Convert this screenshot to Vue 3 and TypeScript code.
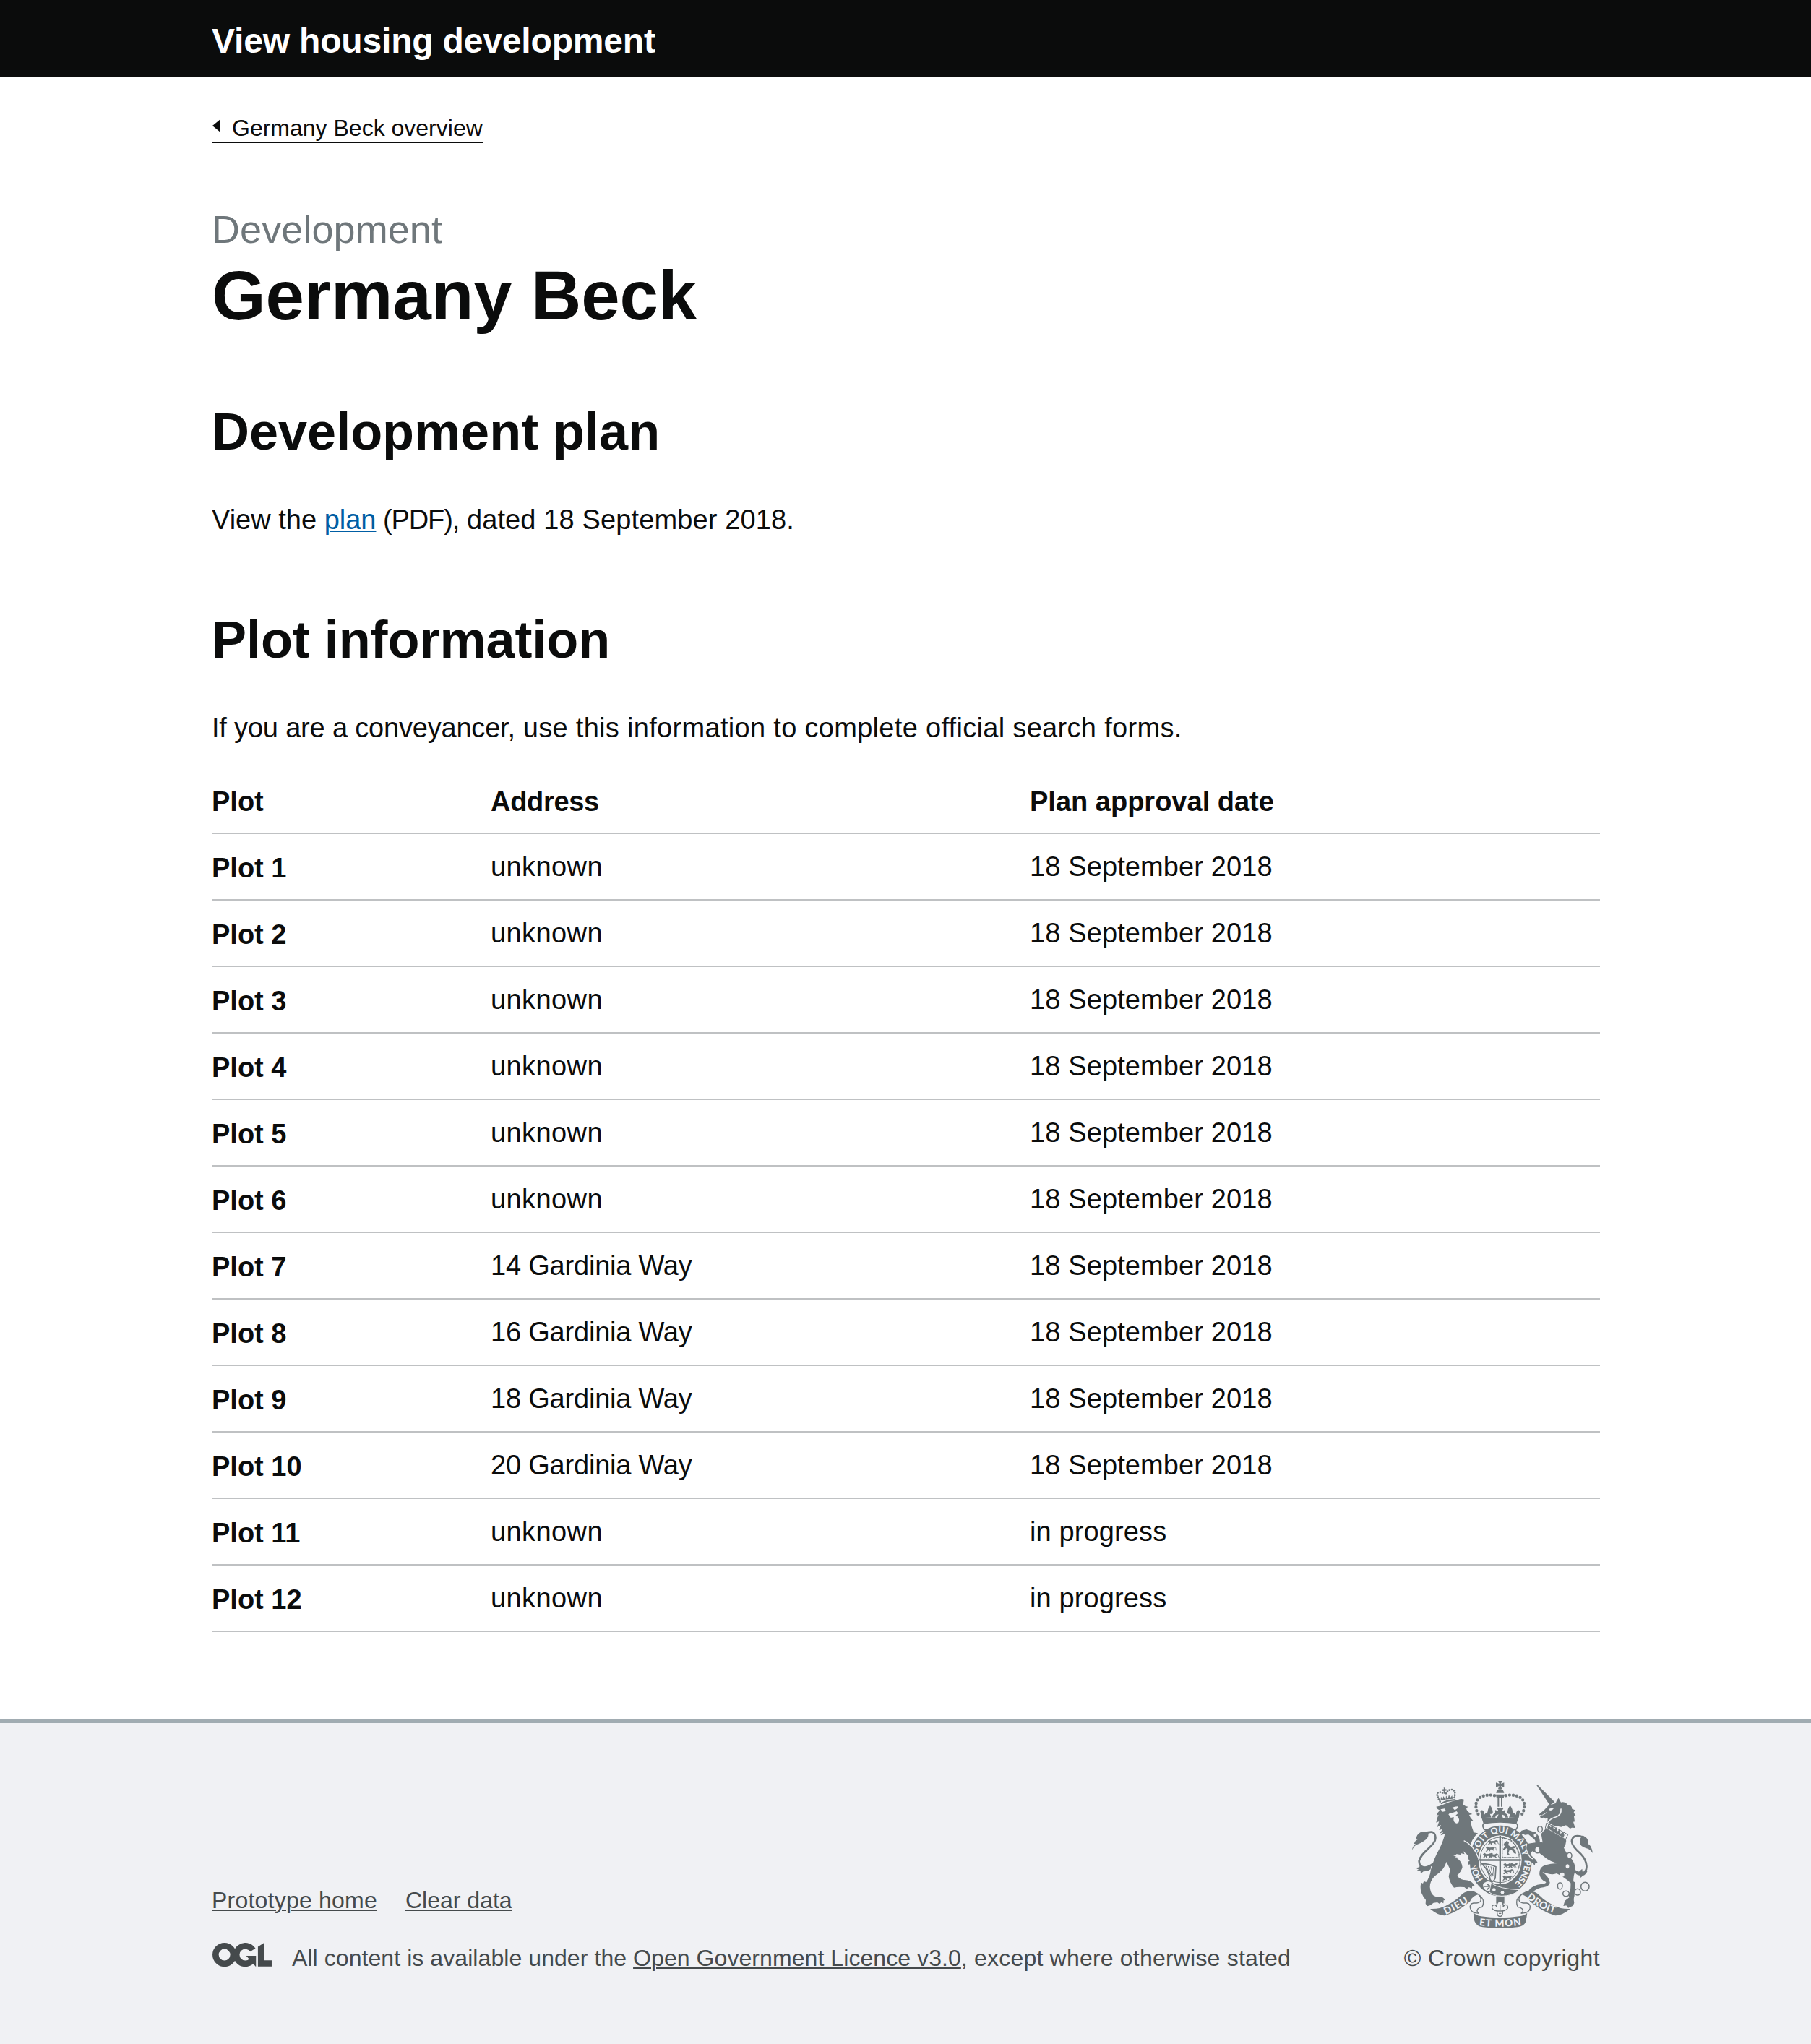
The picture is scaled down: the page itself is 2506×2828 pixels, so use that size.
<script setup lang="ts">
interface Plot {
  name: string
  address: string
  approved: string
}

const addresses: Record<number, string> = {
  7: '14 Gardinia Way',
  8: '16 Gardinia Way',
  9: '18 Gardinia Way',
  10: '20 Gardinia Way',
}

const plots: Plot[] = Array.from({ length: 12 }, (_, i) => ({
  name: `Plot ${i + 1}`,
  address: addresses[i + 1] ?? 'unknown',
  approved: i < 10 ? '18 September 2018' : 'in progress',
}))

const chainLinks = [
  [603, 272, 10, 12],
  [592, 358, 11, 13],
  [725, 382, 10, 12],
  [686, 508, 10, 14],
  [711, 540, 13, 11],
  [759, 533, 12, 13],
  [790, 511, 17, 18],
]
</script>

<template>
  <div class="page">
    <header class="header">
      <div class="container"><a class="service">View housing development</a></div>
    </header>

    <main class="container main">
      <a class="back">
        <svg class="back-arrow" viewBox="0 0 11 18"><path d="M11 0v18L0 9z" /></svg>
        <span>Germany Beck overview</span>
      </a>

      <span class="caption">Development</span>
      <h1>Germany Beck</h1>

      <h2 class="plan-title">Development plan</h2>
      <p class="plan-text">View the <a class="link">plan</a><span class="plan-type"> (PDF),</span><span class="plan-rest"> dated 18 September 2018.</span></p>

      <h2 class="plots-title">Plot information</h2>
      <p class="plots-text"><span class="plots-lead">If you are a conveyancer,</span> use this information to complete official search forms.</p>

      <table>
        <thead>
          <tr>
            <th class="c1">Plot</th>
            <th class="c2 address-head">Address</th>
            <th class="c3">Plan approval date</th>
          </tr>
        </thead>
        <tbody>
          <tr v-for="p in plots" :key="p.name">
            <th>{{ p.name }}</th>
            <td :class="p.address === 'unknown' ? 'loose' : 'tight'">{{ p.address }}</td>
            <td class="date">{{ p.approved }}</td>
          </tr>
        </tbody>
      </table>
    </main>

    <footer class="footer">
      <div class="container footer-row">
        <div>
          <div class="footer-links">
            <a class="home">Prototype home</a>
            <a>Clear data</a>
          </div>
          <div class="licence">
            <svg class="ogl" viewBox="0 0 483.2 195.7">
              <g fill="none" stroke="currentColor" stroke-width="50.7">
                <circle cx="97.8" cy="97.8" r="72.4" />
                <path d="M329 59A72.4 72.4 0 1 0 322 146" />
              </g>
              <path fill="currentColor" d="M421.5 142.8V.1l-50.7 32.3v161.1h112.4v-50.7zM355 105.5h-80l24.3 27.5 33 38.2 19.7 22.2h3z" />
            </svg>
            <span class="licence-text">All content is available under the <a>Open Government Licence v3.0</a><span class="licence-rest">, except where otherwise stated</span></span>
          </div>
        </div>

        <div class="crown">
          <svg class="crest" viewBox="72 72 750 612">
            <defs>
              <path id="garter" d="M440 518A99 115 0 0 1 440 288A99 115 0 0 1 440 518" />
              <path id="dieu" d="M211 628Q270 602 317 568" />
              <path id="droit" d="M547 557Q600 606 672 624" />
              <path id="mon" d="M350 672Q438 683 528 670" />
              <g id="walker">
                <path d="M2 6l8-5 5 5 14-1 8-4 4 3-4 6-4 3 5 6-6-1-6-5-8 1 3 7h-6l-2-6-6 7H1l6-7-2-5z" />
                <path d="M37 4q8-2 7 6t5 8" fill="none" stroke="currentColor" stroke-width="2.4" />
              </g>
              <g id="arches">
                <path d="M428 137C395 124 334 128 337 178Q339 205 355 220" fill="none" stroke="currentColor" stroke-width="13" stroke-linecap="round" stroke-dasharray="0 15.2" />
                <path d="M385 206q0-18 11-32 12 14 11 32l-5 3h-12z" />
                <path d="M360 224l-5-28q8-5 12 0 6 8 4 17 12-14 22-10l8 21z" />
                <path d="M404 224q3-18 15-18l-1 18z" />
              </g>
            </defs>

            <!-- central crown -->
            <g fill="currentColor">
              <path d="M430 72h15l-4 12 13-5v19l-13-5 4 12h-16l5-12-14 5V79l14 5z" />
              <path d="M421 122q2-16 16-17 14 1 17 17zM419 128h37q-1 15-18 16-17-1-19-16z" />
              <path d="M427 143h6v36h-6zM441 143h6v36h-6z" />
              <use href="#arches" />
              <use href="#arches" transform="translate(875 0) scale(-1 1)" />
              <path d="M425 186h26l-7 12 14-5v24l-14-6 5 14h-24l6-14-14 6v-24l14 5z" />
              <path d="M359 220q78 15 156 0l-9 28q-70-11-138 0z" />
            </g>
            <path d="M372 248q65-11 131 0 8 3 7 14l-7 12H371l-5-12q-2-11 6-14z" fill="#f0f1f4" stroke="currentColor" stroke-width="5" />

            <!-- garter and shield -->
            <ellipse cx="440" cy="404" rx="129" ry="147" fill="currentColor" />
            <ellipse cx="437" cy="400" rx="90" ry="102" fill="#f0f1f4" />
            <ellipse cx="437" cy="400" rx="83" ry="94" fill="none" stroke="currentColor" stroke-width="3" />
            <path d="M437.500 300v202M350 400.500h174" fill="none" stroke="currentColor" stroke-width="7" />
            <g fill="currentColor">
              <use href="#walker" x="384" y="316" />
              <use href="#walker" x="376" y="343" />
              <use href="#walker" x="364" y="370" />
              <use href="#walker" x="449" y="412" />
              <use href="#walker" x="449" y="437" />
              <use href="#walker" x="446" y="463" />
              <use href="#walker" x="386" y="370" transform="translate(0 2)" />
              <use href="#walker" x="468" y="412" />
            </g>
            <path d="M446 309l34 7 20 20 13 32v22h-67z" fill="none" stroke="currentColor" stroke-width="4" stroke-dasharray="5 1.5" />
            <path d="M456 328l10-8 8 8-3 10 12 8 13-4 5 9-9 1 9 8 3 14-9-2-9-13-9-2-5 14 6 9-10 1-3-12 5-12-7-6-8 9-6-4 9-13-7-5z" fill="currentColor" />
            <path d="M362 416q31 0 58 12l-3 48q-8 18-20 12-3-40-35-72z" fill="none" stroke="currentColor" stroke-width="5" />
            <path d="M378 424l22 45M388 426l16 43M399 427l9 40M409 430l3 36" stroke="currentColor" stroke-width="3" />
            <path d="M427 500h40l8 12h-45z" fill="currentColor" />
            <g class="motto" fill="#f0f1f4" font-size="36">
              <text><textPath href="#garter" startOffset="12.5%" textLength="76">HON</textPath></text>
              <text><textPath href="#garter" startOffset="29.5%" textLength="88">SOIT</textPath></text>
              <text><textPath href="#garter" startOffset="44.2%" textLength="67">QUI</textPath></text>
              <text><textPath href="#garter" startOffset="55.8%" textLength="82">MAL</textPath></text>
              <text><textPath href="#garter" startOffset="74.6%" textLength="108">PENSE</textPath></text>
            </g>
            <!-- garter buckle and strap end -->
            <path d="M376 490q-14 4-12 17 2 16 16 23l16 2 8-40q-16-10-28-2z" fill="#f0f1f4" stroke="currentColor" stroke-width="5" />
            <path d="M382 500l16 10-15 13M372 510h20" fill="none" stroke="currentColor" stroke-width="5" />
            <path d="M400 497q38 24 118 27-26 26-74 26-32-1-52-16z" fill="currentColor" stroke="#f0f1f4" stroke-width="3" />
            <circle cx="412" cy="524" r="7" fill="#f0f1f4" />
            <circle cx="447" cy="535" r="7" fill="#f0f1f4" />

            <!-- lion -->
            <g fill="currentColor">
              <path d="M190 164q28-16 62-17l2 7q-34 2-61 15z" />
              <path d="M186 156L178 128M248 140L251 112" fill="none" stroke="currentColor" stroke-width="3" />
              <path d="M188 158q-25-38 0-39 12 1 17 9M213 124q8-16 25-16 18 4 9 34" fill="none" stroke="currentColor" stroke-width="8" stroke-linecap="round" stroke-dasharray="0 10" />
              <path d="M197 107l7-1-1-6h7l-1 6 7 1v5l-7 1 2 12h-8l0-11-6-1zM190 154l2-17 7 10 3-12 9 14 2-16 8 11 4-15 6 13 7-10 3 14q-25 1-51 8z" />
              <path d="M172 179L186 176Q225 158 263 150Q275 145 287 149L284 170Q292 177 304 179L297 186Q300 202 322 210L309 213Q313 227 327 239L315 240Q318 262 328 286L345 289Q322 310 314 338L334 365Q347 382 350 418L342 428L333 422L328 431L317 428L316 418L303 420L306 398L296 376L284 388L250 388Q278 402 281 430Q276 450 260 463Q264 479 286 483Q318 482 332 508L322 507L320 519L308 513L299 521L289 513Q262 510 246 515Q228 495 224 468L230 440L219 416L214 408Q208 440 165 468Q146 488 146 512Q150 556 183 553Q202 551 209 568L203 567L202 580L193 575L186 582L177 576L161 578Q148 590 135 592L128 582L129 566Q118 555 110 535Q104 512 110 494L117 498L121 488L130 492Q146 472 150 440Q162 395 185 355Q203 318 208 292L190 298L203 283L187 290L198 272L184 276L192 255L176 264L184 240L172 245Q174 228 182 212L173 217Q177 202 187 194Q176 190 172 179Z" />
            </g>
            <g fill="#f0f1f4">
              <path d="M190 190l17-3 6 10-14 3zM239 182q14-4 24-4-2 12-15 14zM223 211q5-7 16-6l18-7 6 8-10 9q9 2 14 16 2 18-11 17-15-2-11-26l-12 3z" />
              <path d="M243 381l16-1-5-5 21 4-2-7 17 4-7-14 20 18 1 15 8 7-10 8 4 14-8 4-6-10-20-22-9-6z" />
            </g>
            <path d="M287 320q53 26 67 98" fill="none" stroke="#f0f1f4" stroke-width="4" />
            <path d="M130 290Q165 272 169 305C174 340 107 366 101 405Q101 430 126 431Q142 429 160 415" fill="none" stroke="currentColor" stroke-width="8" />
            <path d="M72 359q2-17 15-25l-7-1q4-13 15-18l-8 0q7-31 32-32l22-2-2 10q3 15-12 26-10 8-28 17-18 4-27 25zM88 431q12 4 18-9l12 9q18 2 33-9l-2 17-13 7-17 2-11 9-1-10-15-4 8-3q-10-3-12-9z" fill="currentColor" />

            <!-- unicorn -->
            <g fill="currentColor">
              <path d="M587 87l7 2 70 71-20 13z" />
              <path d="M600 210l22-19 16-17 30-9q2-12 12-22l10 18q16-4 28 10 18 1 18 17l12 5-5 10 8 13-7 3 3 22-6 1 8 25-14-1-7 4-17-14-20 7-31-6-26-14 1-17q-14 6-16-3l-8 5-8-6 5-9-8 1z" />
              <path d="M625 268l86 48q3 14-9 33 5 18 30 44 20 26 17 52-9 26-7 45l6 3-2 56q-5 11-1 29l-5 12-20 9-8-10-12 2 6-21 19-15q-9-12 3-23 3-23 2-36-20-21-58-40-19 9-59-6 26 18 31 44-1 14-27 20-21 1-43 18l-14 15-12-2-6-18 13 2q15-26 56-29 18-3 17-8-22-9-27-31-3-28 20-39 31-9 59-8-36-6-64-31l-16-12q-11 3-29-7l-11 11 26 25 8 13-10-2-3 11-12-12q-16-4-27-35-8-17 8-28-7-11 5-15l29-4q1-12-12-20l-17-14-15 2-8-6-5 8-9-10 9-10 20-5 27 10q10-2 16 9 14 16 12 32l12 4-6-36 12-15q9-6 11-20z" />
            </g>
            <path d="M548 336q-8 14 2 30 10 28 26 30" fill="none" stroke="#f0f1f4" stroke-width="4" />
            <text class="motto" x="528" y="383" font-size="30" fill="#f0f1f4" transform="rotate(68 540 372)">Y</text>
            <path d="M640 190q10-6 19-5-3 8-14 9zM610 215q12-3 21-13" fill="#f0f1f4" stroke="#f0f1f4" stroke-width="2" />
            <path d="M690 187q3 27-22 35-21 5-32 22" fill="none" stroke="#f0f1f4" stroke-width="5" />
            <path d="M630 246l89 49-10 20-84-47z" fill="#f0f1f4" stroke="currentColor" stroke-width="3" />
            <path d="M633 268l5-20 9 17 10-11 3 20 11-10 3 18 12-10 2 20 12-10 4 16-4 10z" fill="currentColor" />
            <path d="M770 457C812 453 797 400 773 376C743 350 728 326 738 311Q746 296 772 302" fill="none" stroke="currentColor" stroke-width="8" />
            <path d="M756 300q38-6 46 19l1 15q14 5 19 38-11-17-26-20-27-8-28-25 0-14 5-21zM748 441q14 9 18 7l12-11 2 14 21-7q-9 20-20 21l-9 9-2-9q-24-2-22-24z" fill="currentColor" />
            <g fill="#f0f1f4">
              <ellipse cx="717" cy="427" rx="7" ry="9" />
              <ellipse cx="695" cy="461" rx="9" ry="9" />
              <ellipse cx="583" cy="297" rx="6" ry="7" />
            </g>
            <ellipse v-for="(l, i) in chainLinks" :key="i" :cx="l[0]" :cy="l[1]" :rx="l[2]" :ry="l[3]" :fill="i === 1 || i === 2 ? '#f0f1f4' : 'none'" stroke="currentColor" stroke-width="4.5" />

            <!-- motto ribbon -->
            <path d="M421 553h34v28h-34z" fill="currentColor" />
            <path d="M437 568q17 14 13 28 5-14 16-8 10 13-8 21l-10 3v8q-1 14-11 15-11-1-12-15v-8l-11-3q-16-8-8-20 12-7 18 7-4-15 13-28z" fill="#f0f1f4" stroke="currentColor" stroke-width="4" />
            <path d="M437 585v22M424 612h26M432 622h10" stroke="currentColor" stroke-width="4" />
            <g fill="currentColor">
              <path d="M147 603q22 1 39-3 54-16 96-60 21-16 49-8l20 10q-31 6-39 31-55 45-103 58-28 1-62-28z" />
              <path d="M728 603q-22 1-39-3-54-16-96-60-21-16-50-8l-21 10q31 6 40 31 56 45 104 58 28 1 62-28z" />
              <path d="M326 618q10 12 32 16 80 12 159 0 20-3 33-14l-6 37q-9 20-35 22-71 10-143 0-26-2-35-25z" />
            </g>
            <g fill="#f0f1f4" stroke="currentColor" stroke-width="4">
              <path d="M347 543q16 16 9 29-9 8-29 7-19 4-13 23 4 12 16 17l20 3q-13-8-5-19 7-7 17-7 8-12 5-29-5-14-20-24z" />
              <path d="M527 543q-17 16-9 29 9 8 30 7 18 4 13 23-4 12-17 17l-20 3q13-8 5-19-7-7-17-7-8-12-5-29 5-14 20-24z" />
            </g>
            <g class="motto" fill="#f0f1f4" font-size="41">
              <text><textPath href="#dieu" textLength="110">DIEU</textPath></text>
              <text><textPath href="#mon" textLength="176">ET MON</textPath></text>
              <text><textPath href="#droit" textLength="134">DROIT</textPath></text>
            </g>
          </svg>
          <a class="copyright">© Crown copyright</a>
        </div>
      </div>
    </footer>
  </div>
</template>

<style>
body {
  background: #fff;
}
</style>

<style scoped>
.page {
  font-family: 'Liberation Sans', Arial, sans-serif;
  font-size: 38px;
  line-height: 50px;
  color: #0b0c0c;
  font-kerning: normal;
}
.container {
  width: 1921px;
  margin: 0 auto;
  margin-left: 293px;
}
.header {
  height: 79px;
  padding-top: 27px;
  background: #0b0c0c;
}
.service {
  display: block;
  font-size: 48px;
  line-height: 60px;
  font-weight: bold;
  letter-spacing: -0.17px;
  color: #fff;
}
.main {
  display: flow-root;
}
.back {
  display: flex;
  width: max-content;
  margin: 55px 0 0 1px;
  padding-bottom: 3px;
  border-bottom: 2px solid #0b0c0c;
  font-size: 32px;
  line-height: 32px;
  gap: 16px;
}
.back-arrow {
  width: 11px;
  height: 18px;
  margin-top: 4px;
}
.back-arrow path {
  fill: #0b0c0c;
}
.caption {
  display: block;
  margin-top: 89px;
  font-size: 54px;
  line-height: 60px;
  letter-spacing: 0.08px;
  color: #6f777b;
}
h1,
h2,
p {
  margin: 0;
}
h1 {
  margin-top: 12px;
  font-size: 96px;
  line-height: 100px;
  letter-spacing: -0.1px;
}
h2 {
  font-size: 72px;
  line-height: 80px;
}
.plan-title {
  margin-top: 98px;
}
.plots-title {
  margin-top: 101px;
  letter-spacing: -0.05px;
}
p {
  margin-top: 57px;
}
.plan-type {
  letter-spacing: -1.1px;
}
.plan-rest {
  letter-spacing: 0.13px;
}
.plots-text {
  letter-spacing: 0.31px;
}
.plots-lead {
  letter-spacing: -0.19px;
}
a {
  text-decoration-thickness: 2px;
  text-underline-offset: 2px;
}
.link {
  color: #005ea5;
  text-decoration-line: underline;
}
table {
  width: 1920px;
  margin: 30px 0 0 1px;
  border-spacing: 0;
  table-layout: fixed;
}
th,
td {
  box-sizing: border-box;
  height: 92px;
  padding: 22px 0 18px;
  border-bottom: 2px solid #bfc1c3;
  text-align: left;
  vertical-align: top;
}
td {
  padding: 20px 0;
}
th:first-child {
  text-indent: -1px;
}
.c1 {
  width: 385px;
}
.c2 {
  width: 746px;
}
.address-head {
  letter-spacing: -0.3px;
}
.loose {
  letter-spacing: 0.4px;
}
.tight {
  letter-spacing: -0.2px;
}
.date {
  letter-spacing: 0.12px;
}
.footer {
  height: 364px;
  margin-top: 120px;
  padding-top: 80px;
  border-top: 6px solid #a1acb2;
  background: #f0f1f4;
  color: #454a4c;
  font-size: 32px;
  line-height: 40px;
}
.footer-row {
  display: flex;
  justify-content: space-between;
  align-items: flex-end;
}
.footer-links {
  display: flex;
  gap: 39px;
  margin-bottom: 40px;
}
.footer-links a,
.licence-text a {
  text-decoration-line: underline;
}
.home {
  letter-spacing: 0.22px;
}
.licence {
  display: flex;
}
.ogl {
  width: 82px;
  height: 33.2px;
  margin: -1px 28px 0 1px;
}
.licence-text {
  letter-spacing: 0.07px;
}
.licence-rest {
  letter-spacing: 0.2px;
}
.crown {
  display: flex;
  flex-direction: column;
  align-items: flex-end;
}
.crest {
  width: 250px;
  height: 204px;
  margin: 0 10px 21px 0;
  color: #6f777b;
}
.motto {
  font-family: Lato, sans-serif;
  font-weight: 900;
}
.copyright {
  letter-spacing: 0.45px;
}
</style>
